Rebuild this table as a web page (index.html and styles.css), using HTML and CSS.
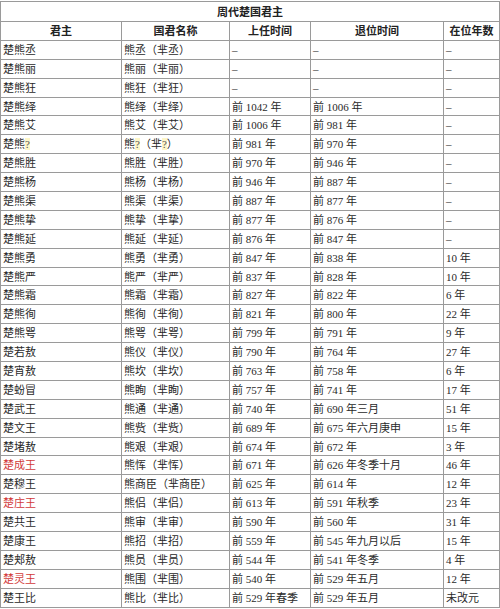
FILE: index.html
```html
<!DOCTYPE html>
<html lang="zh">
<head>
<meta charset="utf-8">
<link rel="stylesheet" href="styles.css">
</head>
<body>
<table class="kings">
<colgroup>
<col class="c1"><col class="c2"><col class="c3"><col class="c4"><col class="c5">
</colgroup>
<tr class="title"><th colspan="5">周代楚国君主</th></tr>
<tr class="head"><th>君主</th><th>国君名称</th><th>上任时间</th><th>退位时间</th><th>在位年数</th></tr>
<tr><td>楚熊丞</td><td>熊丞（芈丞）</td><td>–</td><td>–</td><td>–</td></tr>
<tr><td>楚熊丽</td><td>熊丽（芈丽）</td><td>–</td><td>–</td><td>–</td></tr>
<tr><td>楚熊狂</td><td>熊狂（芈狂）</td><td>–</td><td>–</td><td>–</td></tr>
<tr><td>楚熊绎</td><td>熊绎（芈绎）</td><td>前 1042 年</td><td>前 1006 年</td><td>–</td></tr>
<tr><td>楚熊艾</td><td>熊艾（芈艾）</td><td>前 1006 年</td><td>前 981 年</td><td>–</td></tr>
<tr><td>楚熊<span class="hl">?</span></td><td>熊<span class="hl">?</span>（芈<span class="hl">?</span>）</td><td>前 981 年</td><td>前 970 年</td><td>–</td></tr>
<tr><td>楚熊胜</td><td>熊胜（芈胜）</td><td>前 970 年</td><td>前 946 年</td><td>–</td></tr>
<tr><td>楚熊杨</td><td>熊杨（芈杨）</td><td>前 946 年</td><td>前 887 年</td><td>–</td></tr>
<tr><td>楚熊渠</td><td>熊渠（芈渠）</td><td>前 887 年</td><td>前 877 年</td><td>–</td></tr>
<tr><td>楚熊挚</td><td>熊挚（芈挚）</td><td>前 877 年</td><td>前 876 年</td><td>–</td></tr>
<tr><td>楚熊延</td><td>熊延（芈延）</td><td>前 876 年</td><td>前 847 年</td><td>–</td></tr>
<tr><td>楚熊勇</td><td>熊勇（芈勇）</td><td>前 847 年</td><td>前 838 年</td><td>10 年</td></tr>
<tr><td>楚熊严</td><td>熊严（芈严）</td><td>前 837 年</td><td>前 828 年</td><td>10 年</td></tr>
<tr><td>楚熊霜</td><td>熊霜（芈霜）</td><td>前 827 年</td><td>前 822 年</td><td>6 年</td></tr>
<tr><td>楚熊徇</td><td>熊徇（芈徇）</td><td>前 821 年</td><td>前 800 年</td><td>22 年</td></tr>
<tr><td>楚熊咢</td><td>熊咢（芈咢）</td><td>前 799 年</td><td>前 791 年</td><td>9 年</td></tr>
<tr><td>楚若敖</td><td>熊仪（芈仪）</td><td>前 790 年</td><td>前 764 年</td><td>27 年</td></tr>
<tr><td>楚宵敖</td><td>熊坎（芈坎）</td><td>前 763 年</td><td>前 758 年</td><td>6 年</td></tr>
<tr><td>楚蚡冒</td><td>熊眴（芈眴）</td><td>前 757 年</td><td>前 741 年</td><td>17 年</td></tr>
<tr><td>楚武王</td><td>熊通（芈通）</td><td>前 740 年</td><td>前 690 年三月</td><td>51 年</td></tr>
<tr><td>楚文王</td><td>熊赀（芈赀）</td><td>前 689 年</td><td>前 675 年六月庚申</td><td>15 年</td></tr>
<tr><td>楚堵敖</td><td>熊艰（芈艰）</td><td>前 674 年</td><td>前 672 年</td><td>3 年</td></tr>
<tr><td class="red">楚成王</td><td>熊恽（芈恽）</td><td>前 671 年</td><td>前 626 年冬季十月</td><td>46 年</td></tr>
<tr><td>楚穆王</td><td>熊商臣（芈商臣）</td><td>前 625 年</td><td>前 614 年</td><td>12 年</td></tr>
<tr><td class="red">楚庄王</td><td>熊侣（芈侣）</td><td>前 613 年</td><td>前 591 年秋季</td><td>23 年</td></tr>
<tr><td>楚共王</td><td>熊审（芈审）</td><td>前 590 年</td><td>前 560 年</td><td>31 年</td></tr>
<tr><td>楚康王</td><td>熊招（芈招）</td><td>前 559 年</td><td>前 545 年九月以后</td><td>15 年</td></tr>
<tr><td>楚郏敖</td><td>熊员（芈员）</td><td>前 544 年</td><td>前 541 年冬季</td><td>4 年</td></tr>
<tr><td class="red">楚灵王</td><td>熊围（芈围）</td><td>前 540 年</td><td>前 529 年五月</td><td>12 年</td></tr>
<tr><td>楚王比</td><td>熊比（芈比）</td><td>前 529 年春季</td><td>前 529 年五月</td><td>未改元</td></tr>
</table>
</body>
</html>
```
FILE: styles.css
```css
html, body {
  margin: 0;
  padding: 0;
  background: #fff;
}
body {
  padding-top: 1px;
  font-family: "Liberation Serif", "Noto Sans CJK SC", serif;
  font-size: 11px;
  color: #2a2a2a;
}
.kings {
  border-collapse: collapse;
  table-layout: fixed;
  width: 499px;
}
.c1 { width: 121px; }
.c2 { width: 108px; }
.c3 { width: 81px; }
.c4 { width: 133px; }
.c5 { width: 56px; }
.kings th,
.kings td {
  border: 1px solid #9a9a9a;
  height: 17.9px;
  padding: 0 0 0 2px;
  line-height: 14px;
  white-space: nowrap;
  overflow: hidden;
  vertical-align: middle;
}
.kings th {
  font-weight: bold;
  text-align: center;
  color: #222;
  padding: 0;
}
.kings td {
  text-align: left;
}
.title th {
  height: 18px;
  padding-top: 1px;
}
.red {
  color: #d23a3a;
}
.hl {
  background: #fdf6c8;
  color: #555;
}
```
